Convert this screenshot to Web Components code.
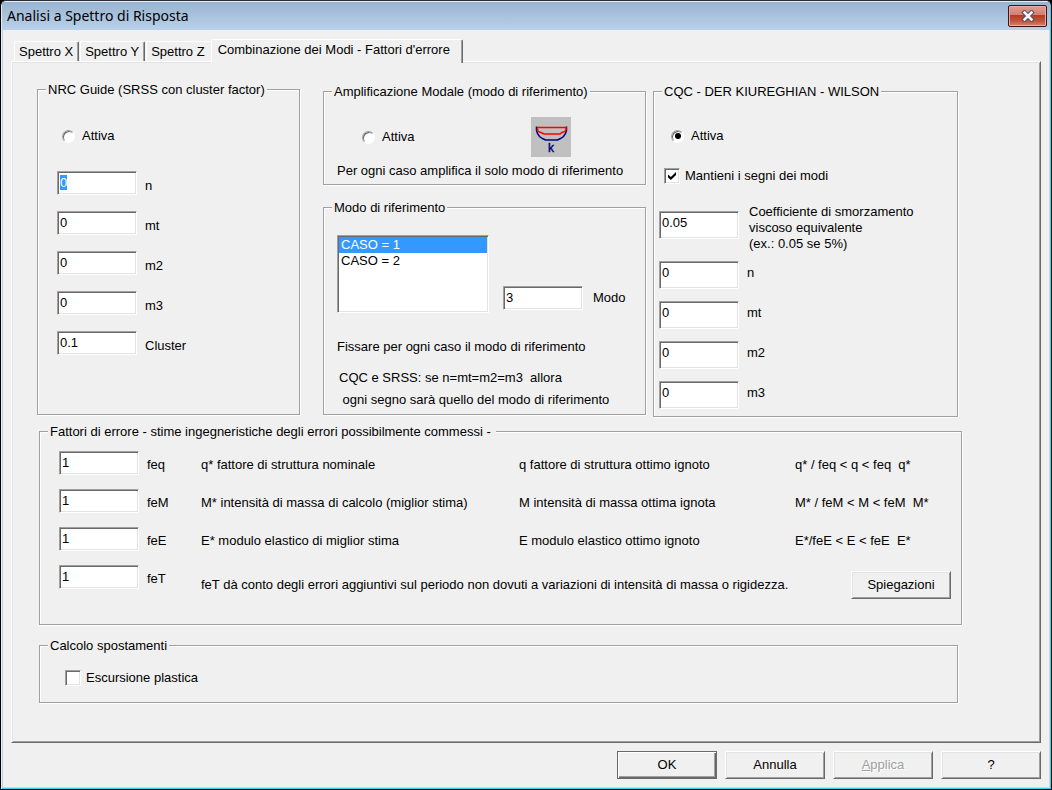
<!DOCTYPE html>
<html lang="it">
<head>
<meta charset="utf-8">
<title>Analisi a Spettro di Risposta</title>
<style>
  html { background: #000; }
  body {
    margin: 0;
    font: 13px/16px "Liberation Sans", Arial, sans-serif;
    color: #000;
    --face: #f0f0f0;
    --light: #fff;
    --soft: #e3e3e3;
    --shade: #a0a0a0;
    --dark: #696969;
    --accent: #3399ff;
  }
</style>
</head>
<body>
<spectrum-dialog></spectrum-dialog>

<script>
  const define = (name, html, setup) => {
    const template = document.createElement('template');
    template.innerHTML = html;
    customElements.define(name, class extends HTMLElement {
      constructor() {
        super();
        this.attachShadow({ mode: 'open' }).append(template.content.cloneNode(true));
      }
      connectedCallback() { if (setup) setup(this, this.shadowRoot); }
    });
  };

  /* Push button with a classic raised edge */
  define('push-button', `
    <style>
      :host { display: block; width: 100px; flex: none; }
      button {
        box-sizing: border-box; width: 100%; height: 28px; padding: 0; margin: 0;
        font: inherit; color: #000; background: var(--face);
        border: 1px solid; border-color: var(--light) var(--dark) var(--dark) var(--light);
        border-radius: 0;
        box-shadow: inset 1px 1px 0 var(--soft), inset -1px -1px 0 var(--shade);
      }
      :host([primary]) button {
        border-color: var(--dark);
        box-shadow: inset 1px 1px 0 var(--light), inset -1px -1px 0 var(--dark), inset -2px -2px 0 var(--shade);
      }
      button:disabled { color: var(--shade); text-shadow: 1px 1px 0 var(--light); }
      ::slotted(u) { text-decoration: underline; }
    </style>
    <button type="button"><slot></slot></button>`,
    (host, root) => { root.querySelector('button').disabled = host.hasAttribute('disabled'); });

  /* Etched frame with a caption */
  define('group-box', `
    <style>
      :host { display: flex; flex-direction: column; }
      fieldset {
        flex: 1; margin: 0; padding: 0; min-width: 0;
        border: 1px solid var(--shade);
        box-shadow: 1px 1px 0 var(--light), inset 1px 1px 0 var(--light);
      }
      legend { margin-left: 8px; padding: 2px 2px 0; background: var(--face); white-space: pre; }
    </style>
    <fieldset><legend></legend><slot></slot></fieldset>`,
    (host, root) => { root.querySelector('legend').textContent = host.getAttribute('caption'); });

  /* Sunken text box followed by its label */
  define('value-field', `
    <style>
      :host { display: flex; align-items: flex-start; }
      input {
        box-sizing: border-box; width: 80px; height: var(--field-height, 24px); flex: none;
        margin: 0; padding: 2px 2px calc(var(--field-height, 24px) - 20px);
        font: inherit; line-height: 16px; color: #000; background: #fff;
        border: 1px solid; border-color: var(--shade) var(--light) var(--light) var(--shade);
        border-radius: 0; outline: none;
        box-shadow: inset 1px 1px 0 var(--dark), inset -1px -1px 0 var(--soft);
      }
      input::selection { background: var(--accent); color: #fff; }
      label { padding: var(--label-drop, 7px) 0 0 var(--label-gap, 8px); white-space: pre-line; }
      :host([multiline]) input { margin-top: 7px; }
      :host([multiline]) label { padding: 0 0 0 10px; }
    </style>
    <input id="box" type="text"><label for="box"></label>`,
    (host, root) => {
      const box = root.querySelector('input');
      box.value = host.getAttribute('value');
      root.querySelector('label').textContent = host.getAttribute('label');
      if (host.hasAttribute('selected')) { box.focus(); box.select(); }
    });

  define('radio-option', `
    <style>
      :host { display: block; }
      label { display: flex; align-items: center; gap: 7px; }
      input {
        appearance: none; box-sizing: border-box; width: 13px; height: 13px; margin: 0;
        border: 1px solid; border-color: var(--shade) var(--light) var(--light) var(--shade);
        border-radius: 50%; background: #fff;
        box-shadow: inset 1px 1px 0 var(--dark);
        display: grid; place-items: center; outline: none;
      }
      input:checked::before { content: ""; width: 6px; height: 6px; border-radius: 50%; background: #000; }
    </style>
    <label><input type="radio" name="metodo"><slot></slot></label>`,
    (host, root) => { root.querySelector('input').checked = host.hasAttribute('checked'); });

  define('check-option', `
    <style>
      :host { display: block; }
      label { display: flex; align-items: center; gap: 5px; }
      input {
        appearance: none; box-sizing: border-box; width: 16px; height: 16px; margin: 0;
        border: 1px solid; border-color: var(--shade) var(--light) var(--light) var(--shade);
        background: #fff; outline: none;
        box-shadow: inset 1px 1px 0 var(--dark), inset -1px -1px 0 var(--soft);
        display: grid; place-items: center;
      }
      input:checked::before {
        content: ""; width: 8px; height: 8px; background: #000;
        clip-path: polygon(0 30%, 36% 62%, 100% 0, 100% 38%, 36% 100%, 0 68%);
      }
    </style>
    <label><input type="checkbox"><slot></slot></label>`,
    (host, root) => { root.querySelector('input').checked = host.hasAttribute('checked'); });

  /* Mode-shape picture: deflected beam with the k symbol */
  define('mode-picture', `
    <style>
      :host { display: block; width: 40px; height: 40px; background: #c0c0c0; }
      svg { display: block; }
      text { font: 12px "Liberation Sans", Arial, sans-serif; }
    </style>
    <svg width="40" height="40" viewBox="0 0 40 40" fill="none" aria-hidden="true">
      <path d="M5.500 9.500v4l1 3 2 3 3 2 3 1.500h12l3-1.500 3-2 2-3 1-3v-4" stroke="#000080" stroke-width="1.500"/>
      <path d="M6 10.500h29v2l-1 2-3 1-2 1.500H13l-3-1.500-3-1-.500-3" stroke="#ff0000" stroke-width="1.500"/>
      <text x="17" y="35" fill="#000080" stroke="#000080" stroke-width=".4">k</text>
    </svg>`);

  define('case-list', `
    <style>
      :host { display: block; width: 152px; flex: none; }
      select {
        box-sizing: border-box; display: block; width: 100%; height: 78px; margin: 0; padding: 1px;
        font: inherit; color: #000; background: #fff; overflow: hidden;
        border: 1px solid; border-color: var(--shade) var(--light) var(--light) var(--shade);
        border-radius: 0; outline: none;
        box-shadow: inset 1px 1px 0 var(--dark), inset -1px -1px 0 var(--soft);
      }
      option { padding: 0 2px; height: 16px; min-height: 16px; line-height: 16px; }
      option:checked {
        background: linear-gradient(var(--accent), var(--accent));
        color: #fff; -webkit-text-fill-color: #fff;
      }
    </style>
    <select size="4" aria-label="Caso">
      <option selected>CASO = 1</option>
      <option>CASO = 2</option>
    </select>`);

  /* One line of the error-factor table: field, two descriptions, inequality */
  define('error-factor', `
    <style>
      :host { display: grid; grid-template-columns: 142px 318fr 276fr 156fr; --label-drop: 6px; }
      ::slotted(span) { padding-top: var(--label-drop); white-space: pre; }
      ::slotted(.note) {
        grid-column: 2 / -1; display: flex; align-items: center;
        justify-content: space-between; padding-top: 6px;
      }
    </style>
    <value-field></value-field><slot></slot>`,
    (host, root) => {
      const field = root.querySelector('value-field');
      field.shadowRoot.querySelector('label').textContent = host.getAttribute('label');
      field.shadowRoot.querySelector('input').value = host.getAttribute('value');
    });

  define('title-bar', `
    <style>
      :host {
        display: flex; align-items: center; justify-content: space-between;
        height: 28px; padding: 0 3px 0 5px;
        background: linear-gradient(#99b4d1, #b9d1ea);
      }
      h1 { margin: 0; font: 14px/20px "Noto Sans", "Open Sans", sans-serif; }
      button {
        box-sizing: border-box; width: 39px; height: 22px; margin: 0; padding: 0;
        display: grid; place-items: center;
        border: 1px solid #43101c; border-radius: 2px;
        background: linear-gradient(#e39d92 0, #d27f72 45%, #b23c22 46%, #c4533b 75%, #d48573 100%);
        box-shadow: inset 0 0 0 1px #e4aca3;
      }
    </style>
    <h1><slot></slot></h1>
    <button type="button" aria-label="Chiudi">
      <svg width="14" height="12" viewBox="0 0 14 12" fill="none" stroke-linecap="square" aria-hidden="true">
        <path d="M3.500 2.500l7 7M10.500 2.500l-7 7" stroke="#4c4f63" stroke-width="4.500"/>
        <path d="M3.500 2.500l7 7M10.500 2.500l-7 7" stroke="#f4f4f4" stroke-width="2.500"/>
      </svg>
    </button>`);

  define('tab-strip', `
    <style>
      :host { display: flex; align-items: flex-end; padding-left: 3px; }
      button {
        height: 20px; margin: 0 1px 0 0; padding: 0 5px 0 4px; font: inherit; color: #000;
        background: var(--face); border: 1px solid; white-space: nowrap;
        border-color: var(--light) var(--dark) transparent var(--light);
        border-bottom: 0; border-radius: 2px 2px 0 0;
        box-shadow: inset -1px 0 0 var(--shade);
      }
      button:nth-of-type(3) { border-right-color: transparent; box-shadow: none; margin-right: 0; }
      button[aria-selected="true"] {
        position: relative; height: 24px; margin-bottom: -2px; padding: 0 12px 4px 6px;
      }
    </style>
    <button type="button" role="tab">Spettro X</button>
    <button type="button" role="tab">Spettro Y</button>
    <button type="button" role="tab">Spettro Z</button>
    <button type="button" role="tab" aria-selected="true">Combinazione dei Modi - Fattori d'errore</button>`,
    host => host.setAttribute('role', 'tablist'));

  define('spectrum-dialog', `
    <style>
      :host {
        display: flex; flex-direction: column; box-sizing: border-box; min-height: 100vh;
        border: 1px solid #000; border-top-color: #2c2c34; border-radius: 6px 6px 0 0;
        background: var(--face); overflow: hidden;
        box-shadow: inset 1px 1px 0 #e4eef8, inset -1px -1px 0 #35d4f0, inset 2px 0 0 #b9d1ea, inset -2px -2px 0 #c8d8e8;
      }
      title-bar { margin: 1px 1px 9px; }
      main { display: flex; flex-direction: column; flex: 1; padding: 0 10px; }
      .panel {
        flex: 1; padding: 18px 78px 35px 25px;
        border: 1px solid; border-color: var(--light) var(--dark) var(--dark) var(--light);
        box-shadow: inset 1px 1px 0 var(--soft), inset -1px -1px 0 var(--shade);
      }
      .methods {
        display: grid; grid-template-columns: 263fr 353fr 305fr;
        margin: 0 4px 5px 0;
      }
      .srss { margin: 0 0 2px; }
      .modal { margin: 2px 7px 2px 23px; display: flex; flex-direction: column; gap: 13px; }
      .modal group-box:last-child { flex: 1; }
      .cqc { margin-top: 2px; --field-height: 28px; --label-drop: 4px; }
      .stack { display: flex; flex-direction: column; }
      .srss .stack { padding: 30px 19px 19px; gap: 16px; }
      .srss radio-option { padding: 0 5px 11px; }
      .amplify { padding: 17px 13px 5px; gap: 6px; }
      .amplify .row { display: flex; align-items: center; justify-content: space-between; padding: 0 61px 0 25px; }
      .reference { padding: 19px 13px 3px; }
      .reference .row { display: flex; align-items: flex-end; gap: 14px; margin-bottom: 26px; --label-drop: 4px; --label-gap: 10px; }
      .reference value-field { padding-bottom: 3px; }
      .hint { padding: 12px 0 0 2px; line-height: 22px; }
      .cqc .stack { padding: 28px 5px 7px; gap: 12px; }
      .cqc radio-option { padding: 0 12px 12px; }
      .cqc check-option { padding: 0 5px 8px; }
      .cqc value-field[multiline] { margin-bottom: -3px; }
      .errors { margin-left: 2px; }
      .errors .stack { padding: 11px 10px 25px 19px; gap: 14px; }
      .shift { margin: 11px 4px 0 2px; }
      .shift .stack { padding: 16px 25px; }
      footer { display: flex; justify-content: flex-end; gap: 8px; padding: 8px 0 10px; }
      p { margin: 0; white-space: pre; }
    </style>
    <title-bar>Analisi a Spettro di Risposta</title-bar>
    <main>
      <tab-strip></tab-strip>
      <section class="panel" role="tabpanel">
        <div class="methods">
          <group-box class="srss" caption="NRC Guide (SRSS con cluster factor)">
            <div class="stack">
              <radio-option>Attiva</radio-option>
              <value-field label="n" value="0" selected></value-field>
              <value-field label="mt" value="0"></value-field>
              <value-field label="m2" value="0"></value-field>
              <value-field label="m3" value="0"></value-field>
              <value-field label="Cluster" value="0.1"></value-field>
            </div>
          </group-box>
          <div class="modal">
            <group-box caption="Amplificazione Modale (modo di riferimento)">
              <div class="stack amplify">
                <div class="row"><radio-option>Attiva</radio-option><mode-picture></mode-picture></div>
                <p>Per ogni caso amplifica il solo modo di riferimento</p>
              </div>
            </group-box>
            <group-box caption="Modo di riferimento">
              <div class="stack reference">
                <div class="row"><case-list></case-list><value-field label="Modo" value="3"></value-field></div>
                <p>Fissare per ogni caso il modo di riferimento</p>
                <p class="hint">CQC e SRSS: se n=mt=m2=m3  allora
 ogni segno sarà quello del modo di riferimento</p>
              </div>
            </group-box>
          </div>
          <group-box class="cqc" caption="CQC - DER KIUREGHIAN - WILSON">
            <div class="stack">
              <radio-option checked>Attiva</radio-option>
              <check-option checked>Mantieni i segni dei modi</check-option>
              <value-field multiline label="Coefficiente di smorzamento&#10;viscoso equivalente&#10;(ex.: 0.05 se 5%)" value="0.05"></value-field>
              <value-field label="n" value="0"></value-field>
              <value-field label="mt" value="0"></value-field>
              <value-field label="m2" value="0"></value-field>
              <value-field label="m3" value="0"></value-field>
            </div>
          </group-box>
        </div>
        <group-box class="errors" caption="Fattori di errore - stime ingegneristiche degli errori possibilmente commessi - ">
          <div class="stack">
            <error-factor label="feq" value="1">
              <span>q* fattore di struttura nominale</span>
              <span>q fattore di struttura ottimo ignoto</span>
              <span>q* / feq &lt; q &lt; feq  q*</span>
            </error-factor>
            <error-factor label="feM" value="1">
              <span>M* intensità di massa di calcolo (miglior stima)</span>
              <span>M intensità di massa ottima ignota</span>
              <span>M* / feM &lt; M &lt; feM  M*</span>
            </error-factor>
            <error-factor label="feE" value="1">
              <span>E* modulo elastico di miglior stima</span>
              <span>E modulo elastico ottimo ignoto</span>
              <span>E*/feE &lt; E &lt; feE  E*</span>
            </error-factor>
            <error-factor label="feT" value="1">
              <div class="note">
                <span>feT dà conto degli errori aggiuntivi sul periodo non dovuti a variazioni di intensità di massa o rigidezza.</span>
                <push-button>Spiegazioni</push-button>
              </div>
            </error-factor>
          </div>
        </group-box>
        <group-box class="shift" caption="Calcolo spostamenti">
          <div class="stack"><check-option>Escursione plastica</check-option></div>
        </group-box>
      </section>
      <footer>
        <push-button primary>OK</push-button>
        <push-button>Annulla</push-button>
        <push-button disabled><u>A</u>pplica</push-button>
        <push-button>?</push-button>
      </footer>
    </main>`);
</script>
</body>
</html>
